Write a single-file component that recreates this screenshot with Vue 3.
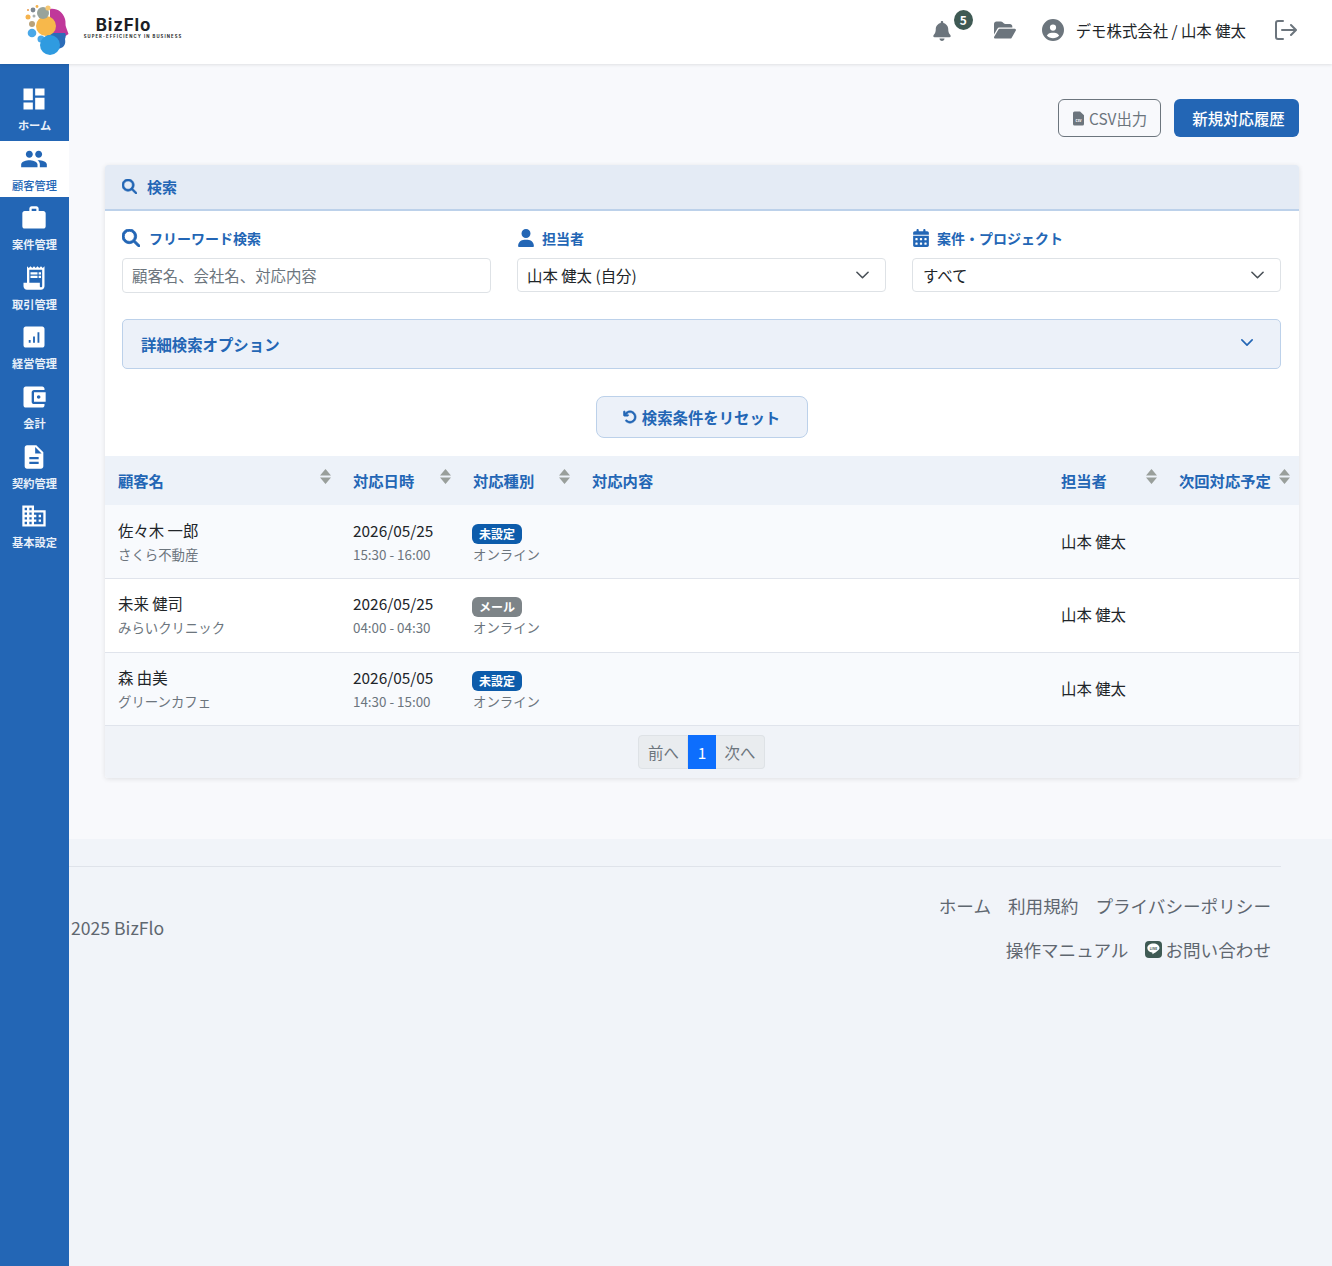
<template>
  <div class="app">
    <header class="topbar">
      <div class="logo">
        <svg class="logo-mark" viewBox="0 0 46 54" width="46" height="54">
          <path d="M25 4c7-1 13 3 15 10 1 3 0 6 1 8l2.5 7-3 2H25z" fill="#c0389a" />
          <path d="M22 28h18c1 1 1 4 0 6 1 5-1 8-4 9-2 1-4 1-5 1H22z" fill="#2c6cb8" />
          <circle cx="21" cy="21" r="10" fill="#f7b84b" />
          <circle cx="18" cy="8" r="6" fill="#98a39b" />
          <circle cx="23" cy="3" r="2.6" fill="#f7c872" />
          <circle cx="7" cy="28" r="4.3" fill="#4aa8e8" />
          <circle cx="3" cy="12" r="2.5" fill="#f5b34d" />
          <circle cx="8" cy="5" r="2.4" fill="#7d8791" />
          <circle cx="12" cy="1.5" r="1.4" fill="#f5b34d" />
          <circle cx="7" cy="19" r="3" fill="#b9a27a" />
          <circle cx="9" cy="11" r="1.5" fill="#a9b0b0" />
          <circle cx="3" cy="5" r="1" fill="#e79a4c" />
          <circle cx="16" cy="34" r="3.5" fill="#4aa8e8" />
          <circle cx="25" cy="40" r="10" fill="#2f9be0" />
        </svg>
        <div class="logo-text">
          <span class="logo-name">BizFlo</span>
          <span class="logo-sub">SUPER-EFFICIENCY IN BUSINESS</span>
        </div>
      </div>

      <div class="top-actions">
        <div class="bell">
          <svg viewBox="0 0 448 512" width="18" height="20" fill="currentColor">
            <path d="M224 0c-17.7 0-32 14.3-32 32V51.2C119 66 64 130.6 64 208v18.8c0 47-17.3 92.4-48.5 127.6l-7.4 8.3c-8.4 9.4-10.4 22.9-5.3 34.4S19.4 416 32 416H416c12.6 0 24-7.4 29.2-18.9s3.1-25-5.3-34.4l-7.4-8.3C401.3 319.2 384 273.9 384 226.8V208c0-77.4-55-142-128-156.8V32c0-17.7-14.3-32-32-32zm45.3 493.3c12-12 18.7-28.3 18.7-45.3H224 160c0 17 6.7 33.3 18.7 45.3s28.3 18.7 45.3 18.7s33.3-6.7 45.3-18.7z" />
          </svg>
          <span class="bell-count">5</span>
        </div>
        <svg class="folder" viewBox="0 0 576 512" width="22" height="20" fill="currentColor">
          <path d="M88.7 223.8L0 375.8V96C0 60.7 28.7 32 64 32H181.5c17 0 33.3 6.7 45.3 18.7l26.5 26.5c12 12 28.3 18.7 45.3 18.7H416c35.3 0 64 28.7 64 64v32H144c-22.8 0-43.8 12.1-55.3 31.8zm27.6 16.1C122.1 230 132.6 224 144 224H544c11.5 0 22 6.1 27.7 16.1s5.7 22.2-.1 32.1l-112 192C453.9 474 443.4 480 432 480H32c-11.5 0-22-6.1-27.7-16.1s-5.7-22.2 .1-32.1l112-192z" />
        </svg>
        <svg class="user-icon" viewBox="0 0 512 512" width="22" height="22" fill="currentColor">
          <path d="M399 384.2C376.9 345.8 335.4 320 288 320H224c-47.4 0-88.9 25.8-111 64.2c35.2 39.2 86.2 63.8 143 63.8s107.8-24.7 143-63.8zM0 256a256 256 0 1 1 512 0A256 256 0 1 1 0 256zm256 16a72 72 0 1 0 0-144 72 72 0 1 0 0 144z" />
        </svg>
        <span class="user-name">デモ株式会社 / 山本 健太</span>
        <svg class="logout" viewBox="0 0 22 20" width="22" height="20" fill="none" stroke="currentColor" stroke-width="2" stroke-linecap="round" stroke-linejoin="round">
          <path d="M8 1H3a2 2 0 0 0-2 2v14a2 2 0 0 0 2 2h5" />
          <path d="M7 10h13.500M16 5l5 5-5 5" />
        </svg>
      </div>
    </header>

    <div class="body">
      <nav class="sidebar">
        <a v-for="item in menu" :key="item.label" class="menu-item" :class="{ active: item.active }">
          <svg viewBox="0 0 24 24" width="28" height="28" fill="currentColor">
            <path :d="item.icon" fill-rule="evenodd" />
          </svg>
          <span>{{ item.label }}</span>
        </a>
      </nav>

      <div class="content">
        <main class="main">
          <div class="page-actions">
            <button class="btn-csv">
              <svg viewBox="0 0 14 18" width="11" height="15">
                <path d="M2 0h7l5 5v11a2 2 0 0 1-2 2H2a2 2 0 0 1-2-2V2a2 2 0 0 1 2-2z" fill="#6c757d" />
                <text x="7" y="13" font-size="5" fill="#fff" text-anchor="middle" font-weight="700">csv</text>
              </svg>
              CSV出力
            </button>
            <button class="btn-new">新規対応履歴</button>
          </div>

          <section class="card">
            <div class="card-head">
              <svg viewBox="0 0 512 512" width="15" height="15" fill="currentColor" stroke="currentColor" stroke-width="24">
                <path :d="searchIcon" />
              </svg>
              <span>検索</span>
            </div>

            <div class="search-body">
              <div class="fields">
                <div class="field">
                  <label>
                    <svg class="label-search" viewBox="0 0 512 512" width="18" height="18" fill="currentColor" stroke="currentColor" stroke-width="24">
                      <path :d="searchIcon" />
                    </svg>
                    フリーワード検索
                  </label>
                  <input class="text-input" type="text" placeholder="顧客名、会社名、対応内容" />
                </div>
                <div class="field">
                  <label>
                    <svg class="label-user" viewBox="0 0 448 512" width="16" height="18" fill="currentColor">
                      <path d="M224 256A128 128 0 1 0 224 0a128 128 0 1 0 0 256zm-45.7 48C79.8 304 0 383.8 0 482.3C0 498.7 13.3 512 29.7 512H418.3c16.4 0 29.7-13.3 29.7-29.7C448 383.8 368.2 304 269.7 304H178.3z" />
                    </svg>
                    担当者
                  </label>
                  <div class="select-box">
                    <span>山本 健太 (自分)</span>
                    <svg viewBox="0 0 14 8" width="13" height="8" fill="none" stroke="#495057" stroke-width="1.7" stroke-linecap="round" stroke-linejoin="round">
                      <path d="M1 1l6 6 6-6" />
                    </svg>
                  </div>
                </div>
                <div class="field">
                  <label>
                    <svg class="label-cal" viewBox="0 0 448 512" width="16" height="18" fill="currentColor">
                      <path d="M128 0c17.7 0 32 14.3 32 32V64H288V32c0-17.7 14.3-32 32-32s32 14.3 32 32V64h48c26.5 0 48 21.5 48 48v48H0V112C0 85.5 21.5 64 48 64H96V32c0-17.7 14.3-32 32-32zM0 192H448V464c0 26.5-21.5 48-48 48H48c-26.5 0-48-21.5-48-48V192zm64 80v32c0 8.8 7.2 16 16 16h32c8.8 0 16-7.2 16-16V272c0-8.8-7.2-16-16-16H80c-8.8 0-16 7.2-16 16zm128 0v32c0 8.8 7.2 16 16 16h32c8.8 0 16-7.2 16-16V272c0-8.8-7.2-16-16-16H208c-8.8 0-16 7.2-16 16zm144-16c-8.8 0-16 7.2-16 16v32c0 8.8 7.2 16 16 16h32c8.8 0 16-7.2 16-16V272c0-8.8-7.2-16-16-16H336zM64 400v32c0 8.8 7.2 16 16 16h32c8.8 0 16-7.2 16-16V400c0-8.8-7.2-16-16-16H80c-8.8 0-16 7.2-16 16zm144-16c-8.8 0-16 7.2-16 16v32c0 8.8 7.2 16 16 16h32c8.8 0 16-7.2 16-16V400c0-8.8-7.2-16-16-16H208zm112 16v32c0 8.8 7.2 16 16 16h32c8.8 0 16-7.2 16-16V400c0-8.8-7.2-16-16-16H336c-8.8 0-16 7.2-16 16z" />
                    </svg>
                    案件・プロジェクト
                  </label>
                  <div class="select-box project">
                    <span>すべて</span>
                    <svg viewBox="0 0 14 8" width="13" height="8" fill="none" stroke="#495057" stroke-width="1.7" stroke-linecap="round" stroke-linejoin="round">
                      <path d="M1 1l6 6 6-6" />
                    </svg>
                  </div>
                </div>
              </div>

              <div class="accordion">
                <span>詳細検索オプション</span>
                <svg viewBox="0 0 14 8" width="12" height="7" fill="none" stroke="currentColor" stroke-width="1.9" stroke-linecap="round" stroke-linejoin="round">
                  <path d="M1 1l6 6 6-6" />
                </svg>
              </div>

              <div class="reset-row">
                <button class="btn-reset">
                  <svg viewBox="0 0 512 512" width="14" height="14" fill="currentColor" stroke="currentColor" stroke-width="20">
                    <path d="M125.7 160H176c17.7 0 32 14.3 32 32s-14.3 32-32 32H48c-17.7 0-32-14.3-32-32V64c0-17.7 14.3-32 32-32s32 14.3 32 32v51.2L97.6 97.6c87.5-87.5 229.3-87.5 316.8 0s87.5 229.3 0 316.8s-229.3 87.5-316.8 0c-12.5-12.5-12.5-32.8 0-45.3s32.8-12.5 45.3 0c62.5 62.5 163.8 62.5 226.3 0s62.5-163.8 0-226.3s-163.8-62.5-226.3 0L125.7 160z" />
                  </svg>
                  検索条件をリセット
                </button>
              </div>
            </div>

            <table class="history">
              <colgroup>
                <col style="width: 235px" />
                <col style="width: 120px" />
                <col style="width: 119px" />
                <col />
                <col style="width: 118px" />
                <col style="width: 133px" />
              </colgroup>
              <thead>
                <tr>
                  <th v-for="col in columns" :key="col.label">
                    <div class="th-inner">
                      <span>{{ col.label }}</span>
                      <svg v-if="col.sort" class="sort" viewBox="0 0 11 15" width="11" height="15" fill="#999f9b">
                        <path d="M5.5 0L11 6.4H0zM0 8.6h11L5.5 15z" />
                      </svg>
                    </div>
                  </th>
                </tr>
              </thead>
              <tbody>
                <tr v-for="row in rows" :key="row.name">
                  <td>
                    <div class="main-line">{{ row.name }}</div>
                    <div class="sub-line">{{ row.company }}</div>
                  </td>
                  <td>
                    <div class="main-line">{{ row.date }}</div>
                    <div class="sub-line">{{ row.time }}</div>
                  </td>
                  <td>
                    <div class="badge-line">
                      <span class="badge" :class="row.badgeClass">{{ row.badge }}</span>
                    </div>
                    <div class="sub-line">オンライン</div>
                  </td>
                  <td></td>
                  <td class="staff">山本 健太</td>
                  <td></td>
                </tr>
              </tbody>
            </table>

            <div class="pager-bar">
              <div class="pager">
                <span class="page-link">前へ</span>
                <span class="page-link current">1</span>
                <span class="page-link">次へ</span>
              </div>
            </div>
          </section>
        </main>

        <footer class="footer">
          <div class="footer-line"></div>
          <div class="footer-row">
            <span class="copyright">2025 BizFlo</span>
            <div class="footer-links">
              <div class="links-row">
                <a>ホーム</a>
                <a>利用規約</a>
                <a>プライバシーポリシー</a>
              </div>
              <div class="links-row">
                <a>操作マニュアル</a>
                <a class="contact">
                  <svg viewBox="0 0 17 17" width="17" height="17">
                    <rect width="17" height="17" rx="4" fill="#3f5a54" />
                    <path d="M8.5 2.5c-3.5 0-6.2 2-6.2 4.6 0 2.2 2 4.1 4.8 4.5.6.1.4.8.3 1.3 0 .3.2.4.5.2 1.6-.9 5.6-3.300 6.2-5 .3-.4.4-.7.4-1 0-2.6-2.800-4.600-6-4.600z" fill="#fff" />
                    <text x="8.500" y="8.500" font-size="3.400" font-weight="700" fill="#3f5a54" text-anchor="middle">LINE</text>
                  </svg>
                  お問い合わせ
                </a>
              </div>
            </div>
          </div>
        </footer>
      </div>
    </div>
  </div>
</template>

<script setup>
const searchIcon =
  'M416 208c0 45.9-14.9 88.3-40 122.7L502.6 457.4c12.5 12.5 12.5 32.8 0 45.3s-32.8 12.5-45.3 0L330.7 376c-34.4 25.2-76.8 40-122.7 40C93.1 416 0 322.9 0 208S93.1 0 208 0S416 93.1 416 208zM208 352a144 144 0 1 0 0-288 144 144 0 1 0 0 288z'

const menu = [
  { label: 'ホーム', icon: 'M3 13h8V3H3v10zm0 8h8v-6H3v6zm10 0h8V11h-8v10zm0-18v6h8V3h-8z' },
  {
    label: '顧客管理',
    active: true,
    icon: 'M16 11c1.66 0 2.99-1.34 2.99-3S17.66 5 16 5c-1.66 0-3 1.34-3 3s1.34 3 3 3zm-8 0c1.66 0 2.99-1.34 2.99-3S9.66 5 8 5C6.34 5 5 6.34 5 8s1.34 3 3 3zm0 2c-2.33 0-7 1.17-7 3.5V19h14v-2.5c0-2.33-4.67-3.5-7-3.5zm8 0c-.29 0-.62.02-.97.05 1.16.84 1.97 1.97 1.97 3.45V19h6v-2.5c0-2.33-4.67-3.5-7-3.5z',
  },
  {
    label: '案件管理',
    icon: 'M20 6h-4V4c0-1.11-.89-2-2-2h-4c-1.11 0-2 .89-2 2v2H4c-1.11 0-1.99.89-1.99 2L2 19c0 1.11.89 2 2 2h16c1.11 0 2-.89 2-2V8c0-1.11-.89-2-2-2zm-6 0h-4V4h4v2z',
  },
  {
    label: '取引管理',
    icon: 'M19.5 3.5L18 2l-1.5 1.5L15 2l-1.5 1.5L12 2l-1.5 1.5L9 2 7.5 3.5 6 2v14H3v3c0 1.66 1.34 3 3 3h12c1.66 0 3-1.34 3-3V2l-1.5 1.5zM19 19c0 .55-.45 1-1 1s-1-.45-1-1v-3H8V5h11v14zM9 7h6v2H9zM16 7h2v2h-2zM9 10h6v2H9zM16 10h2v2h-2z',
  },
  {
    label: '経営管理',
    icon: 'M5 3h14c1.1 0 2 .9 2 2v14c0 1.1-.9 2-2 2H5c-1.1 0-2-.9-2-2V5c0-1.1.9-2 2-2zM7.5 14.5v2.5h1.6v-2.5zM11.2 11.5v5.5h1.6v-5.5zM15 8v9h1.6V8z',
  },
  {
    label: '会計',
    icon: 'M21 18v1c0 1.1-.9 2-2 2H5c-1.11 0-2-.9-2-2V5c0-1.1.89-2 2-2h14c1.1 0 2 .9 2 2v1h-9c-1.11 0-2 .9-2 2v8c0 1.1.89 2 2 2h9zm-9-2h10V8H12v8zm4-2.5c-.83 0-1.5-.67-1.5-1.5s.67-1.5 1.5-1.5 1.5.67 1.5 1.5-.67 1.5-1.5 1.5z',
  },
  {
    label: '契約管理',
    icon: 'M14 2H6c-1.1 0-1.99.9-1.99 2L4 20c0 1.1.89 2 1.99 2H18c1.1 0 2-.9 2-2V8l-6-6zm2 16H8v-2h8v2zm0-4H8v-2h8v2zm-3-5V3.5L18.5 9H13z',
  },
  {
    label: '基本設定',
    icon: 'M12 7V3H2v18h20V7H12zM6 19H4v-2h2v2zm0-4H4v-2h2v2zm0-4H4V9h2v2zm0-4H4V5h2v2zm4 12H8v-2h2v2zm0-4H8v-2h2v2zm0-4H8V9h2v2zm0-4H8V5h2v2zm10 12h-8v-2h2v-2h-2v-2h2v-2h-2V9h8v10zm-2-8h-2v2h2v-2zm0 4h-2v2h2v-2z',
  },
]

const columns = [
  { label: '顧客名', sort: true },
  { label: '対応日時', sort: true },
  { label: '対応種別', sort: true },
  { label: '対応内容', sort: false },
  { label: '担当者', sort: true },
  { label: '次回対応予定', sort: true },
]

const rows = [
  { name: '佐々木 一郎', company: 'さくら不動産', date: '2026/05/25', time: '15:30 - 16:00', badge: '未設定', badgeClass: 'blue' },
  { name: '未来 健司', company: 'みらいクリニック', date: '2026/05/25', time: '04:00 - 04:30', badge: 'メール', badgeClass: 'gray' },
  { name: '森 由美', company: 'グリーンカフェ', date: '2026/05/05', time: '14:30 - 15:00', badge: '未設定', badgeClass: 'blue' },
]
</script>

<style>
body {
  margin: 0;
}
</style>

<style scoped>
.app {
  display: flex;
  flex-direction: column;
  min-height: 100vh;
  font-family: "Noto Sans CJK JP", "Noto Sans", sans-serif;
  color: #212529;
  background: #f1f4f9;
}

.topbar {
  display: flex;
  align-items: center;
  justify-content: space-between;
  height: 64px;
  padding: 0 35px 0 25px;
  background: #fff;
  box-shadow: 0 1px 3px rgba(0, 0, 0, 0.1);
  position: relative;
  z-index: 2;
}

.logo {
  display: flex;
  align-items: center;
}

.logo-text {
  display: flex;
  flex-direction: column;
  align-items: center;
  width: 98px;
  margin-left: 13px;
  margin-top: -8px;
  color: #1c1f26;
}

.logo-name {
  margin-right: 19px;
  font-family: Inter, sans-serif;
  font-weight: 700;
  font-size: 17px;
  line-height: 18px;
  letter-spacing: 0.8px;
}

.logo-sub {
  font-family: Inter, sans-serif;
  font-weight: 700;
  font-size: 4.2px;
  line-height: 6px;
  letter-spacing: 1.1px;
  white-space: nowrap;
}

.top-actions {
  display: flex;
  align-items: center;
  padding-bottom: 4px;
  color: #6c757d;
}

.bell {
  position: relative;
  display: flex;
  margin-right: 43px;
  margin-top: 2px;
}

.bell-count {
  position: absolute;
  left: 21px;
  top: -11px;
  width: 19px;
  height: 20px;
  border-radius: 50%;
  background: #3f5a54;
  color: #fff;
  font-size: 12px;
  font-weight: 700;
  line-height: 20px;
  text-align: center;
}

.folder {
  margin-right: 26px;
}

.user-icon {
  margin-right: 12px;
}

.user-name {
  color: #212529;
  font-size: 15.4px;
  margin-right: 29px;
  white-space: nowrap;
}

.body {
  display: flex;
  flex: 1;
}

.sidebar {
  width: 69px;
  flex-shrink: 0;
  padding-top: 17px;
  background: #2366b5;
  color: #fff;
}

.menu-item {
  display: flex;
  flex-direction: column;
  align-items: center;
  height: 56px;
  margin-bottom: 3.6px;
  padding-top: 4px;
  font-size: 11.2px;
  font-weight: 700;
  line-height: 14px;
  color: #e9f0f9;
  box-sizing: border-box;
  white-space: nowrap;
}

.menu-item svg {
  margin: 0 2px 5px 0;
  color: #fff;
}

.menu-item.active {
  background: #fff;
  color: #2366b5;
  font-weight: 500;
}

.menu-item.active svg {
  color: #2366b5;
}

.content {
  flex: 1;
  display: flex;
  flex-direction: column;
  min-width: 0;
}

.main {
  padding: 35px 33px 61px 36px;
  background: #f8f9fc;
}

.page-actions {
  display: flex;
  justify-content: flex-end;
  gap: 13px;
  margin-bottom: 28px;
}

.page-actions button {
  height: 38px;
  border-radius: 6px;
  font-family: inherit;
  font-size: 15.4px;
  box-sizing: border-box;
}

.btn-csv {
  display: flex;
  align-items: center;
  gap: 5px;
  width: 103px;
  padding: 0 0 0 14px;
  border: 1px solid #6c757d;
  background: transparent;
  color: #6c757d;
}

.btn-new {
  width: 125px;
  padding: 0 14px 0 18px;
  border: 0;
  background: #2366b5;
  color: #fff;
  font-weight: 500;
  white-space: nowrap;
}

.card {
  background: #fff;
  box-shadow: 0 1px 5px rgba(0, 0, 0, 0.1);
  border-radius: 3px;
  overflow: hidden;
}

.card-head {
  display: flex;
  align-items: center;
  gap: 10px;
  height: 46px;
  padding: 0 0 2px 17px;
  box-sizing: border-box;
  background: #e4ebf5;
  border-bottom: 2px solid #bcd1ea;
  color: #2366b5;
  font-size: 15px;
  font-weight: 700;
}

.search-body {
  padding: 16px 18px 18px 17px;
}

.fields {
  display: grid;
  grid-template-columns: repeat(3, 1fr);
  gap: 26px;
}

.field label {
  display: flex;
  align-items: center;
  height: 22px;
  margin-bottom: 9px;
  font-size: 14px;
  font-weight: 700;
  color: #2366b5;
  white-space: nowrap;
}

.label-search {
  margin-right: 9px;
}

.label-user {
  margin: 0 8px 0 1px;
}

.label-cal {
  margin: 0 8px 0 1px;
}

.text-input {
  display: block;
  width: 100%;
  height: 35px;
  padding: 0 9px 2px;
  box-sizing: border-box;
  border: 1px solid #dee2e6;
  border-radius: 4px;
  background: #fff;
  font-family: inherit;
  font-size: 15.4px;
  outline: none;
}

.text-input::placeholder {
  color: #6c757d;
}

.select-box {
  display: flex;
  align-items: center;
  justify-content: space-between;
  height: 34px;
  padding: 0 16px 0 9px;
  box-sizing: border-box;
  border: 1px solid #dee2e6;
  border-radius: 4px;
  background: #fff;
  font-size: 15.4px;
}

.select-box.project {
  padding-left: 10px;
}

.select-box svg {
  margin-top: -1px;
}

.accordion {
  display: flex;
  align-items: center;
  justify-content: space-between;
  height: 50px;
  margin-top: 26px;
  padding: 0 27px 0 18px;
  box-sizing: border-box;
  border: 1px solid #bcd1ea;
  border-radius: 5px;
  background: #ecf1f9;
  color: #2366b5;
  font-size: 15.4px;
  font-weight: 700;
}

.accordion svg {
  margin-top: -4px;
}

.reset-row {
  display: flex;
  justify-content: center;
  margin-top: 27px;
}

.btn-reset {
  display: flex;
  align-items: center;
  justify-content: center;
  gap: 5px;
  width: 212px;
  height: 42px;
  border: 1px solid #bcd1ea;
  border-radius: 8px;
  background: #ecf1f9;
  color: #2366b5;
  font-family: inherit;
  font-size: 15.4px;
  font-weight: 700;
}

.history {
  width: 100%;
  table-layout: fixed;
  border-collapse: collapse;
}

.history th {
  height: 49px;
  padding: 0 9px 0 13px;
  background: #edf2f9;
  color: #2366b5;
  font-size: 15.3px;
  font-weight: 700;
  text-align: left;
  box-sizing: border-box;
}

.th-inner {
  display: flex;
  justify-content: space-between;
  align-items: flex-start;
  height: 25px;
  margin-top: 1px;
  white-space: nowrap;
}

.th-inner span {
  line-height: 24px;
  margin-top: -1px;
}

.history td {
  height: 73.5px;
  padding: 0 13px;
  border-bottom: 1px solid #e0e4ec;
  box-sizing: border-box;
  vertical-align: middle;
}

.history tbody tr:nth-child(odd) td {
  background: #f8fafd;
}

.history tbody tr:nth-child(even) td {
  background: #fff;
}

.main-line {
  font-size: 15.4px;
  line-height: 24px;
  white-space: nowrap;
}

.sub-line {
  font-size: 13.4px;
  line-height: 24px;
  color: #6c757d;
  white-space: nowrap;
}

.badge-line {
  display: flex;
  height: 24px;
  align-items: flex-start;
  margin-left: -1px;
}

.badge {
  display: block;
  width: 50px;
  height: 20px;
  margin-top: 6px;
  border-radius: 6px;
  color: #fff;
  font-size: 12px;
  font-weight: 700;
  line-height: 20px;
  text-align: center;
}

.badge.blue {
  background: #0d5cab;
}

.badge.gray {
  background: #7d8488;
}

.history td.staff {
  padding-bottom: 2px;
  font-size: 15.4px;
  white-space: nowrap;
}

.pager-bar {
  display: flex;
  justify-content: center;
  align-items: center;
  height: 52px;
  background: #f0f3f8;
}

.pager {
  display: flex;
  height: 34px;
  margin-right: 1px;
}

.page-link {
  display: flex;
  align-items: center;
  justify-content: center;
  width: 49px;
  border: 1px solid #dee2e6;
  border-left: 0;
  background: #e9ecef;
  color: #6c757d;
  font-size: 15.4px;
  box-sizing: border-box;
}

.page-link:first-child {
  width: 50px;
  padding-left: 1px;
  border-left: 1px solid #dee2e6;
  border-radius: 4px 0 0 4px;
}

.page-link:last-child {
  border-radius: 0 4px 4px 0;
}

.page-link.current {
  width: 28px;
  border: 0;
  background: #0d6efd;
  color: #fff;
}

.footer {
  flex: 1;
  padding-top: 27px;
  background: #f1f4f9;
  color: #5f6770;
  font-size: 17.6px;
}

.footer-line {
  width: 1212px;
  height: 1px;
  background: #dfe3ea;
}

.footer-row {
  display: flex;
  justify-content: space-between;
  align-items: center;
  width: 1212px;
  padding: 16px 10px 0 2px;
  box-sizing: border-box;
}

.links-row {
  display: flex;
  justify-content: flex-end;
  align-items: center;
  gap: 17px;
  height: 44px;
}

.contact {
  display: flex;
  align-items: center;
  gap: 3px;
}
</style>
